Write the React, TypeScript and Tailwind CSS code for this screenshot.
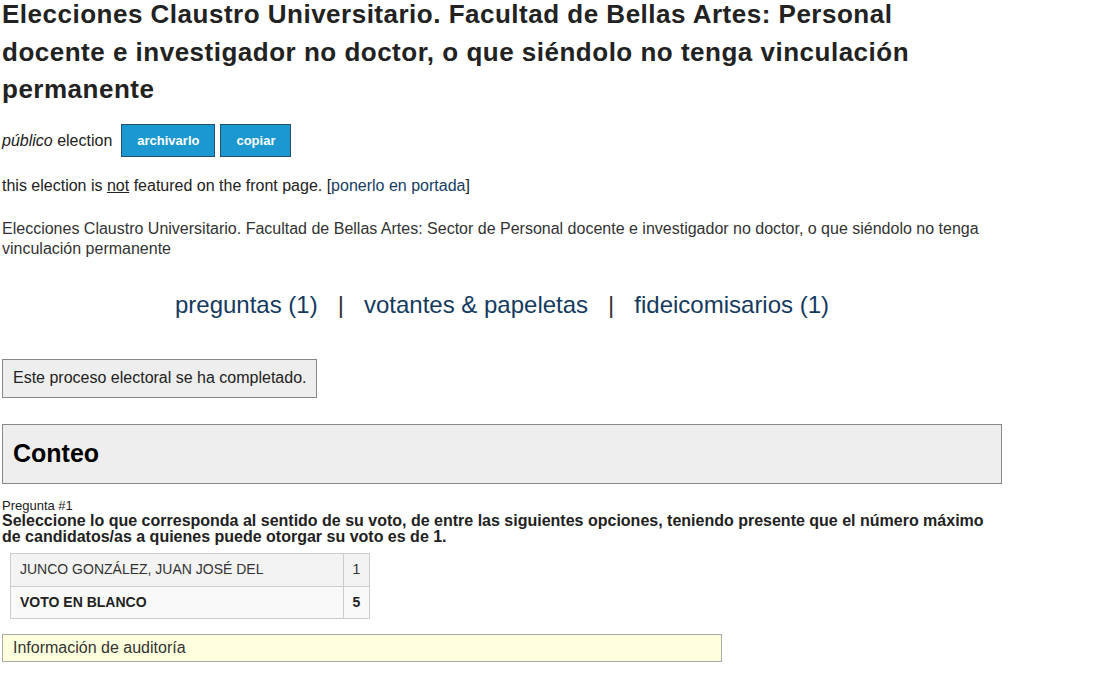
export default function App() {
  return (
    <div className="min-h-[700px] bg-white font-['Liberation_Sans',Arial,sans-serif] text-[16px] text-[#333]">
      <div className="ml-[2px] w-[1000px]">
        <h1 className="-mt-[4px] pr-[80px] text-[26px] font-bold leading-[37.5px] tracking-[0.5px] text-[#222]">
          Elecciones Claustro Universitario. Facultad de Bellas Artes: Personal docente e investigador no doctor, o que siéndolo no tenga vinculación permanente
        </h1>

        <div className="mt-[16px] flex h-[32px] items-center">
          <span className="text-[#222]">
            <em>público</em> election
          </span>
          <button className="ml-[9px] h-[33px] border border-[#23506c] bg-[#1b98cf] px-[15px] text-[13px] font-bold text-white">
            archivarlo
          </button>
          <button className="ml-[5px] h-[33px] border border-[#23506c] bg-[#1b98cf] px-[15px] text-[13px] font-bold text-white">
            copiar
          </button>
        </div>

        <p className="mt-[19px] leading-[20px] text-[#222]">
          this election is <u>not</u> featured on the front page. [<a className="text-[#163e63]">ponerlo en portada</a>]
        </p>

        <p className="mt-[23px] pr-[16px] leading-[20px]">
          Elecciones Claustro Universitario. Facultad de Bellas Artes: Sector de Personal docente e investigador no doctor, o que siéndolo no tenga vinculación permanente
        </p>

        <nav className="mt-[32px] flex items-center justify-center gap-[20px] text-[24px] leading-[28px] text-[#143a60]">
          <a>preguntas (1)</a>
          <span className="text-[#333]">|</span>
          <a>votantes &amp; papeletas</a>
          <span className="text-[#333]">|</span>
          <a>fideicomisarios (1)</a>
        </nav>

        <div className="mt-[40px] flex h-[39px] w-[315px] items-center whitespace-nowrap border border-[#888] bg-[#eee] pl-[10px] leading-[20px] text-[#222]">
          Este proceso electoral se ha completado.
        </div>

        <div className="mt-[26px] flex h-[60px] items-center border border-[#888] bg-[#eee] px-[10px]">
          <h2 className="text-[25px] font-bold text-black">Conteo</h2>
        </div>

        <div className="mt-[15px] text-[13px] leading-[14px] text-[#222]">Pregunta #1</div>
        <div className="pr-[12px] font-bold leading-[16px] text-[#222]">
          Seleccione lo que corresponda al sentido de su voto, de entre las siguientes opciones, teniendo presente que el número máximo de candidatos/as a quienes puede otorgar su voto es de 1.
        </div>

        <table className="ml-[8px] mt-[8px] w-[360px] border-collapse text-[14px] text-[#333]">
          <tbody>
            <tr className="h-[33px] bg-[#f3f3f3]">
              <td className="border border-[#ccc] px-[9px]">JUNCO GONZÁLEZ, JUAN JOSÉ DEL</td>
              <td className="w-[26px] border border-[#ccc] text-center">1</td>
            </tr>
            <tr className="h-[32px] bg-[#f9f9f9] font-bold text-[#222]">
              <td className="border border-[#ccc] px-[9px]">VOTO EN BLANCO</td>
              <td className="w-[26px] border border-[#ccc] text-center">5</td>
            </tr>
          </tbody>
        </table>

        <div className="mt-[15px] flex h-[28px] w-[720px] items-center border border-[#aaa] bg-[#ffffdd] px-[10px] text-[#333]">
          Información de auditoría
        </div>
      </div>
    </div>
  );
}
